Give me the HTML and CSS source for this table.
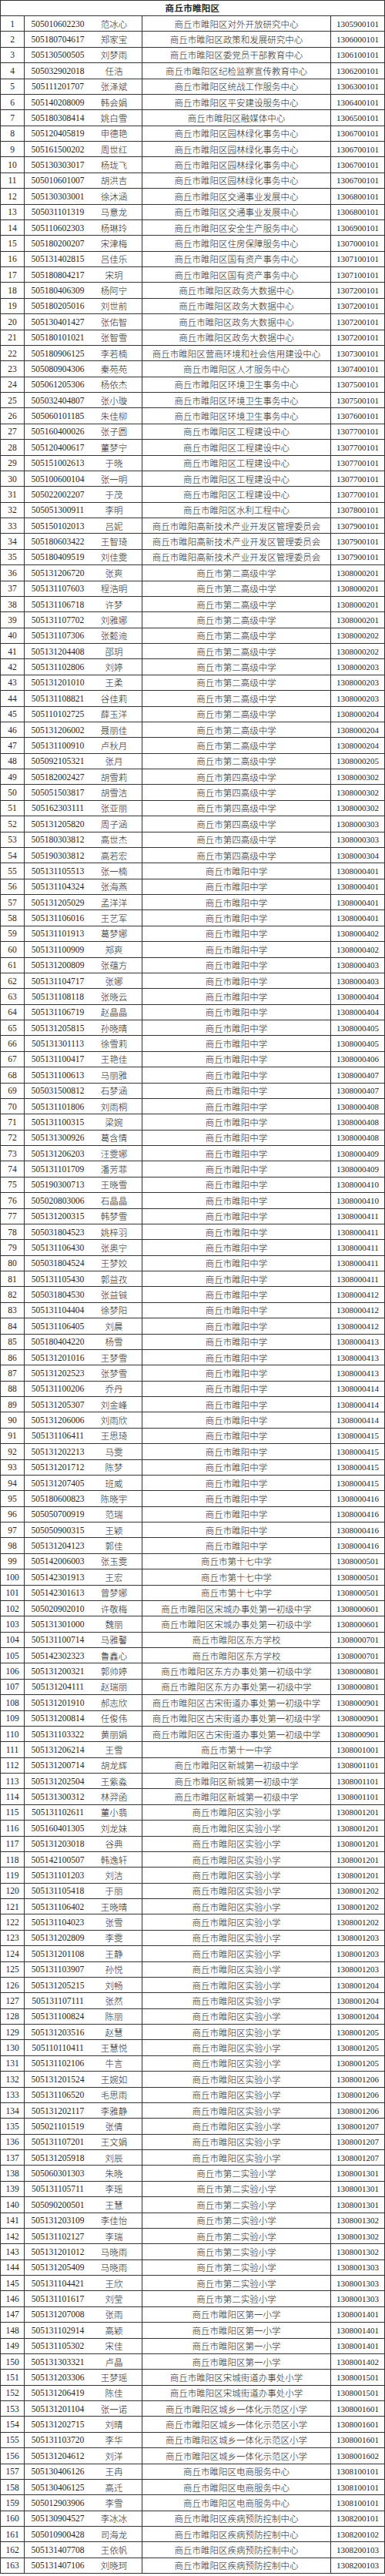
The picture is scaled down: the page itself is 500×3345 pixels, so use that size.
FILE: index.html
```html
<!DOCTYPE html>
<html lang="zh-CN">
<head>
<meta charset="utf-8">
<title>商丘市睢阳区</title>
<link rel="stylesheet" href="styles.css">
</head>
<body>
<div class="sheet">
<div class="title">商丘市睢阳区</div>
<div class="row"><span class="no">1</span><span class="id">505010602230</span><span class="nm">范冰心</span><span class="un">商丘市睢阳区对外开放研究中心</span><span class="cd">1305900101</span></div>
<div class="row"><span class="no">2</span><span class="id">505180704617</span><span class="nm">郑家宝</span><span class="un">商丘市睢阳区政策和发展研究中心</span><span class="cd">1306000101</span></div>
<div class="row"><span class="no">3</span><span class="id">505130500505</span><span class="nm">刘梦雨</span><span class="un">商丘市睢阳区委党员干部教育中心</span><span class="cd">1306100101</span></div>
<div class="row"><span class="no">4</span><span class="id">505032902018</span><span class="nm">任浩</span><span class="un">商丘市睢阳区纪检监察宣传教育中心</span><span class="cd">1306200101</span></div>
<div class="row"><span class="no">5</span><span class="id">505111201707</span><span class="nm">张泽斌</span><span class="un">商丘市睢阳区统战工作服务中心</span><span class="cd">1306300101</span></div>
<div class="row"><span class="no">6</span><span class="id">505140208009</span><span class="nm">韩会娟</span><span class="un">商丘市睢阳区平安建设服务中心</span><span class="cd">1306400101</span></div>
<div class="row"><span class="no">7</span><span class="id">505180308414</span><span class="nm">姚白雪</span><span class="un">商丘市睢阳区融媒体中心</span><span class="cd">1306500101</span></div>
<div class="row"><span class="no">8</span><span class="id">505120405819</span><span class="nm">申德艳</span><span class="un">商丘市睢阳区园林绿化事务中心</span><span class="cd">1306700101</span></div>
<div class="row"><span class="no">9</span><span class="id">505161500202</span><span class="nm">周世红</span><span class="un">商丘市睢阳区园林绿化事务中心</span><span class="cd">1306700101</span></div>
<div class="row"><span class="no">10</span><span class="id">505130303017</span><span class="nm">杨珑飞</span><span class="un">商丘市睢阳区园林绿化事务中心</span><span class="cd">1306700101</span></div>
<div class="row"><span class="no">11</span><span class="id">505010601007</span><span class="nm">胡洪吉</span><span class="un">商丘市睢阳区园林绿化事务中心</span><span class="cd">1306700101</span></div>
<div class="row"><span class="no">12</span><span class="id">505130303001</span><span class="nm">徐沐涵</span><span class="un">商丘市睢阳区交通事业发展中心</span><span class="cd">1306800101</span></div>
<div class="row"><span class="no">13</span><span class="id">505031101319</span><span class="nm">马意龙</span><span class="un">商丘市睢阳区交通事业发展中心</span><span class="cd">1306800101</span></div>
<div class="row"><span class="no">14</span><span class="id">505110602303</span><span class="nm">杨琳玲</span><span class="un">商丘市睢阳区安全生产服务中心</span><span class="cd">1306900101</span></div>
<div class="row"><span class="no">15</span><span class="id">505180200207</span><span class="nm">宋津梅</span><span class="un">商丘市睢阳区住房保障服务中心</span><span class="cd">1307000101</span></div>
<div class="row"><span class="no">16</span><span class="id">505131402815</span><span class="nm">吕佳乐</span><span class="un">商丘市睢阳区国有资产事务中心</span><span class="cd">1307100101</span></div>
<div class="row"><span class="no">17</span><span class="id">505180804217</span><span class="nm">宋玥</span><span class="un">商丘市睢阳区国有资产事务中心</span><span class="cd">1307100101</span></div>
<div class="row"><span class="no">18</span><span class="id">505180406309</span><span class="nm">杨阿宁</span><span class="un">商丘市睢阳区政务大数据中心</span><span class="cd">1307200101</span></div>
<div class="row"><span class="no">19</span><span class="id">505180205016</span><span class="nm">刘世前</span><span class="un">商丘市睢阳区政务大数据中心</span><span class="cd">1307200101</span></div>
<div class="row"><span class="no">20</span><span class="id">505130401427</span><span class="nm">张佑智</span><span class="un">商丘市睢阳区政务大数据中心</span><span class="cd">1307200101</span></div>
<div class="row"><span class="no">21</span><span class="id">505180101021</span><span class="nm">张智雪</span><span class="un">商丘市睢阳区政务大数据中心</span><span class="cd">1307200101</span></div>
<div class="row"><span class="no">22</span><span class="id">505180906125</span><span class="nm">李若楠</span><span class="un">商丘市睢阳区营商环境和社会信用建设中心</span><span class="cd">1307300101</span></div>
<div class="row"><span class="no">23</span><span class="id">505080904306</span><span class="nm">秦苑苑</span><span class="un">商丘市睢阳区人才服务中心</span><span class="cd">1307400101</span></div>
<div class="row"><span class="no">24</span><span class="id">505061205306</span><span class="nm">杨依杰</span><span class="un">商丘市睢阳区环境卫生事务中心</span><span class="cd">1307500101</span></div>
<div class="row"><span class="no">25</span><span class="id">505032404807</span><span class="nm">张小璇</span><span class="un">商丘市睢阳区环境卫生事务中心</span><span class="cd">1307500101</span></div>
<div class="row"><span class="no">26</span><span class="id">505060101185</span><span class="nm">朱佳柳</span><span class="un">商丘市睢阳区环境卫生事务中心</span><span class="cd">1307600101</span></div>
<div class="row"><span class="no">27</span><span class="id">505160400026</span><span class="nm">张子圆</span><span class="un">商丘市睢阳区工程建设中心</span><span class="cd">1307700101</span></div>
<div class="row"><span class="no">28</span><span class="id">505120400617</span><span class="nm">董梦宁</span><span class="un">商丘市睢阳区工程建设中心</span><span class="cd">1307700101</span></div>
<div class="row"><span class="no">29</span><span class="id">505151002613</span><span class="nm">于晓</span><span class="un">商丘市睢阳区工程建设中心</span><span class="cd">1307700101</span></div>
<div class="row"><span class="no">30</span><span class="id">505100600104</span><span class="nm">张一明</span><span class="un">商丘市睢阳区工程建设中心</span><span class="cd">1307700101</span></div>
<div class="row"><span class="no">31</span><span class="id">505022002207</span><span class="nm">于茂</span><span class="un">商丘市睢阳区工程建设中心</span><span class="cd">1307700101</span></div>
<div class="row"><span class="no">32</span><span class="id">505051300911</span><span class="nm">李明</span><span class="un">商丘市睢阳区水利工程中心</span><span class="cd">1307800101</span></div>
<div class="row"><span class="no">33</span><span class="id">505150102013</span><span class="nm">吕妮</span><span class="un">商丘市睢阳高新技术产业开发区管理委员会</span><span class="cd">1307900101</span></div>
<div class="row"><span class="no">34</span><span class="id">505180603422</span><span class="nm">王智琦</span><span class="un">商丘市睢阳高新技术产业开发区管理委员会</span><span class="cd">1307900101</span></div>
<div class="row"><span class="no">35</span><span class="id">505180409519</span><span class="nm">刘佳雯</span><span class="un">商丘市睢阳高新技术产业开发区管理委员会</span><span class="cd">1307900101</span></div>
<div class="row"><span class="no">36</span><span class="id">505131206720</span><span class="nm">张爽</span><span class="un">商丘市第二高级中学</span><span class="cd">1308000201</span></div>
<div class="row"><span class="no">37</span><span class="id">505131107603</span><span class="nm">程浩明</span><span class="un">商丘市第二高级中学</span><span class="cd">1308000201</span></div>
<div class="row"><span class="no">38</span><span class="id">505131106718</span><span class="nm">许梦</span><span class="un">商丘市第二高级中学</span><span class="cd">1308000201</span></div>
<div class="row"><span class="no">39</span><span class="id">505131107702</span><span class="nm">刘雅娜</span><span class="un">商丘市第二高级中学</span><span class="cd">1308000201</span></div>
<div class="row"><span class="no">40</span><span class="id">505131107306</span><span class="nm">张懿迪</span><span class="un">商丘市第二高级中学</span><span class="cd">1308000202</span></div>
<div class="row"><span class="no">41</span><span class="id">505131204408</span><span class="nm">邵玥</span><span class="un">商丘市第二高级中学</span><span class="cd">1308000202</span></div>
<div class="row"><span class="no">42</span><span class="id">505131102806</span><span class="nm">刘婷</span><span class="un">商丘市第二高级中学</span><span class="cd">1308000203</span></div>
<div class="row"><span class="no">43</span><span class="id">505131201010</span><span class="nm">王柔</span><span class="un">商丘市第二高级中学</span><span class="cd">1308000203</span></div>
<div class="row"><span class="no">44</span><span class="id">505131108821</span><span class="nm">谷佳莉</span><span class="un">商丘市第二高级中学</span><span class="cd">1308000203</span></div>
<div class="row"><span class="no">45</span><span class="id">505110102725</span><span class="nm">薛玉洋</span><span class="un">商丘市第二高级中学</span><span class="cd">1308000204</span></div>
<div class="row"><span class="no">46</span><span class="id">505131206002</span><span class="nm">聂丽佳</span><span class="un">商丘市第二高级中学</span><span class="cd">1308000204</span></div>
<div class="row"><span class="no">47</span><span class="id">505131100910</span><span class="nm">卢秋月</span><span class="un">商丘市第二高级中学</span><span class="cd">1308000204</span></div>
<div class="row"><span class="no">48</span><span class="id">505092105321</span><span class="nm">张月</span><span class="un">商丘市第二高级中学</span><span class="cd">1308000205</span></div>
<div class="row"><span class="no">49</span><span class="id">505182002427</span><span class="nm">胡雪莉</span><span class="un">商丘市第四高级中学</span><span class="cd">1308000302</span></div>
<div class="row"><span class="no">50</span><span class="id">505051503817</span><span class="nm">胡雪洁</span><span class="un">商丘市第四高级中学</span><span class="cd">1308000302</span></div>
<div class="row"><span class="no">51</span><span class="id">505162303111</span><span class="nm">张亚丽</span><span class="un">商丘市第四高级中学</span><span class="cd">1308000302</span></div>
<div class="row"><span class="no">52</span><span class="id">505131205820</span><span class="nm">周子涵</span><span class="un">商丘市第四高级中学</span><span class="cd">1308000303</span></div>
<div class="row"><span class="no">53</span><span class="id">505180303812</span><span class="nm">高世杰</span><span class="un">商丘市第四高级中学</span><span class="cd">1308000303</span></div>
<div class="row"><span class="no">54</span><span class="id">505190303812</span><span class="nm">高若宏</span><span class="un">商丘市第四高级中学</span><span class="cd">1308000304</span></div>
<div class="row"><span class="no">55</span><span class="id">505131105513</span><span class="nm">张一楠</span><span class="un">商丘市睢阳中学</span><span class="cd">1308000401</span></div>
<div class="row"><span class="no">56</span><span class="id">505131104324</span><span class="nm">张海燕</span><span class="un">商丘市睢阳中学</span><span class="cd">1308000401</span></div>
<div class="row"><span class="no">57</span><span class="id">505131205029</span><span class="nm">孟洋洋</span><span class="un">商丘市睢阳中学</span><span class="cd">1308000401</span></div>
<div class="row"><span class="no">58</span><span class="id">505131106016</span><span class="nm">王艺军</span><span class="un">商丘市睢阳中学</span><span class="cd">1308000401</span></div>
<div class="row"><span class="no">59</span><span class="id">505131101913</span><span class="nm">葛梦娜</span><span class="un">商丘市睢阳中学</span><span class="cd">1308000402</span></div>
<div class="row"><span class="no">60</span><span class="id">505131100909</span><span class="nm">郑爽</span><span class="un">商丘市睢阳中学</span><span class="cd">1308000402</span></div>
<div class="row"><span class="no">61</span><span class="id">505131200809</span><span class="nm">张蕴方</span><span class="un">商丘市睢阳中学</span><span class="cd">1308000403</span></div>
<div class="row"><span class="no">62</span><span class="id">505131104717</span><span class="nm">张娜</span><span class="un">商丘市睢阳中学</span><span class="cd">1308000403</span></div>
<div class="row"><span class="no">63</span><span class="id">505131108118</span><span class="nm">张晓云</span><span class="un">商丘市睢阳中学</span><span class="cd">1308000404</span></div>
<div class="row"><span class="no">64</span><span class="id">505131106719</span><span class="nm">赵晶晶</span><span class="un">商丘市睢阳中学</span><span class="cd">1308000404</span></div>
<div class="row"><span class="no">65</span><span class="id">505131205815</span><span class="nm">孙晓晴</span><span class="un">商丘市睢阳中学</span><span class="cd">1308000405</span></div>
<div class="row"><span class="no">66</span><span class="id">505131301113</span><span class="nm">徐雪莉</span><span class="un">商丘市睢阳中学</span><span class="cd">1308000405</span></div>
<div class="row"><span class="no">67</span><span class="id">505131100417</span><span class="nm">王艳佳</span><span class="un">商丘市睢阳中学</span><span class="cd">1308000406</span></div>
<div class="row"><span class="no">68</span><span class="id">505131100613</span><span class="nm">马丽雅</span><span class="un">商丘市睢阳中学</span><span class="cd">1308000407</span></div>
<div class="row"><span class="no">69</span><span class="id">505031500812</span><span class="nm">石梦涵</span><span class="un">商丘市睢阳中学</span><span class="cd">1308000407</span></div>
<div class="row"><span class="no">70</span><span class="id">505131101806</span><span class="nm">刘雨桐</span><span class="un">商丘市睢阳中学</span><span class="cd">1308000408</span></div>
<div class="row"><span class="no">71</span><span class="id">505131100315</span><span class="nm">梁婉</span><span class="un">商丘市睢阳中学</span><span class="cd">1308000408</span></div>
<div class="row"><span class="no">72</span><span class="id">505131300926</span><span class="nm">葛含情</span><span class="un">商丘市睢阳中学</span><span class="cd">1308000408</span></div>
<div class="row"><span class="no">73</span><span class="id">505131206203</span><span class="nm">汪雯娜</span><span class="un">商丘市睢阳中学</span><span class="cd">1308000409</span></div>
<div class="row"><span class="no">74</span><span class="id">505131101709</span><span class="nm">潘芳菲</span><span class="un">商丘市睢阳中学</span><span class="cd">1308000409</span></div>
<div class="row"><span class="no">75</span><span class="id">505190300713</span><span class="nm">王晓雪</span><span class="un">商丘市睢阳中学</span><span class="cd">1308000410</span></div>
<div class="row"><span class="no">76</span><span class="id">505020803006</span><span class="nm">石晶晶</span><span class="un">商丘市睢阳中学</span><span class="cd">1308000410</span></div>
<div class="row"><span class="no">77</span><span class="id">505131200315</span><span class="nm">韩梦雪</span><span class="un">商丘市睢阳中学</span><span class="cd">1308000411</span></div>
<div class="row"><span class="no">78</span><span class="id">505031804523</span><span class="nm">姚梓羽</span><span class="un">商丘市睢阳中学</span><span class="cd">1308000411</span></div>
<div class="row"><span class="no">79</span><span class="id">505131106430</span><span class="nm">张奥宁</span><span class="un">商丘市睢阳中学</span><span class="cd">1308000411</span></div>
<div class="row"><span class="no">80</span><span class="id">505031804524</span><span class="nm">王梦姣</span><span class="un">商丘市睢阳中学</span><span class="cd">1308000411</span></div>
<div class="row"><span class="no">81</span><span class="id">505131105430</span><span class="nm">郭益孜</span><span class="un">商丘市睢阳中学</span><span class="cd">1308000411</span></div>
<div class="row"><span class="no">82</span><span class="id">505031804530</span><span class="nm">张益铖</span><span class="un">商丘市睢阳中学</span><span class="cd">1308000412</span></div>
<div class="row"><span class="no">83</span><span class="id">505131104404</span><span class="nm">徐梦阳</span><span class="un">商丘市睢阳中学</span><span class="cd">1308000412</span></div>
<div class="row"><span class="no">84</span><span class="id">505131106405</span><span class="nm">刘晨</span><span class="un">商丘市睢阳中学</span><span class="cd">1308000412</span></div>
<div class="row"><span class="no">85</span><span class="id">505180404220</span><span class="nm">杨雪</span><span class="un">商丘市睢阳中学</span><span class="cd">1308000413</span></div>
<div class="row"><span class="no">86</span><span class="id">505131201016</span><span class="nm">王梦雪</span><span class="un">商丘市睢阳中学</span><span class="cd">1308000413</span></div>
<div class="row"><span class="no">87</span><span class="id">505131202523</span><span class="nm">张梦雪</span><span class="un">商丘市睢阳中学</span><span class="cd">1308000413</span></div>
<div class="row"><span class="no">88</span><span class="id">505131100206</span><span class="nm">乔丹</span><span class="un">商丘市睢阳中学</span><span class="cd">1308000414</span></div>
<div class="row"><span class="no">89</span><span class="id">505131205307</span><span class="nm">刘金峰</span><span class="un">商丘市睢阳中学</span><span class="cd">1308000414</span></div>
<div class="row"><span class="no">90</span><span class="id">505131206006</span><span class="nm">刘雨欣</span><span class="un">商丘市睢阳中学</span><span class="cd">1308000414</span></div>
<div class="row"><span class="no">91</span><span class="id">505131106411</span><span class="nm">王思琦</span><span class="un">商丘市睢阳中学</span><span class="cd">1308000415</span></div>
<div class="row"><span class="no">92</span><span class="id">505131202213</span><span class="nm">马雯</span><span class="un">商丘市睢阳中学</span><span class="cd">1308000415</span></div>
<div class="row"><span class="no">93</span><span class="id">505131201712</span><span class="nm">陈梦</span><span class="un">商丘市睢阳中学</span><span class="cd">1308000415</span></div>
<div class="row"><span class="no">94</span><span class="id">505131207405</span><span class="nm">班威</span><span class="un">商丘市睢阳中学</span><span class="cd">1308000415</span></div>
<div class="row"><span class="no">95</span><span class="id">505180600823</span><span class="nm">陈晓宇</span><span class="un">商丘市睢阳中学</span><span class="cd">1308000416</span></div>
<div class="row"><span class="no">96</span><span class="id">505050700919</span><span class="nm">范瑞</span><span class="un">商丘市睢阳中学</span><span class="cd">1308000416</span></div>
<div class="row"><span class="no">97</span><span class="id">505050900315</span><span class="nm">王颖</span><span class="un">商丘市睢阳中学</span><span class="cd">1308000416</span></div>
<div class="row"><span class="no">98</span><span class="id">505131204123</span><span class="nm">郭佳</span><span class="un">商丘市睢阳中学</span><span class="cd">1308000416</span></div>
<div class="row"><span class="no">99</span><span class="id">505142006003</span><span class="nm">张玉雯</span><span class="un">商丘市第十七中学</span><span class="cd">1308000501</span></div>
<div class="row"><span class="no">100</span><span class="id">505142301913</span><span class="nm">王宏</span><span class="un">商丘市第十七中学</span><span class="cd">1308000501</span></div>
<div class="row"><span class="no">101</span><span class="id">505142301613</span><span class="nm">曾梦娜</span><span class="un">商丘市第十七中学</span><span class="cd">1308000501</span></div>
<div class="row"><span class="no">102</span><span class="id">505020902010</span><span class="nm">许敬梅</span><span class="un">商丘市睢阳区宋城办事处第一初级中学</span><span class="cd">1308000601</span></div>
<div class="row"><span class="no">103</span><span class="id">505131301000</span><span class="nm">魏丽</span><span class="un">商丘市睢阳区宋城办事处第一初级中学</span><span class="cd">1308000601</span></div>
<div class="row"><span class="no">104</span><span class="id">505131100714</span><span class="nm">马雅馨</span><span class="un">商丘市睢阳区东方学校</span><span class="cd">1308000701</span></div>
<div class="row"><span class="no">105</span><span class="id">505142302323</span><span class="nm">鲁鑫心</span><span class="un">商丘市睢阳区东方学校</span><span class="cd">1308000701</span></div>
<div class="row"><span class="no">106</span><span class="id">505131200321</span><span class="nm">郭帅婷</span><span class="un">商丘市睢阳区东方办事处第一初级中学</span><span class="cd">1308000801</span></div>
<div class="row"><span class="no">107</span><span class="id">505131204111</span><span class="nm">赵瑞丽</span><span class="un">商丘市睢阳区东方办事处第一初级中学</span><span class="cd">1308000801</span></div>
<div class="row"><span class="no">108</span><span class="id">505131201910</span><span class="nm">郝志欣</span><span class="un">商丘市睢阳区古宋街道办事处第一初级中学</span><span class="cd">1308000901</span></div>
<div class="row"><span class="no">109</span><span class="id">505131200814</span><span class="nm">任俊伟</span><span class="un">商丘市睢阳区古宋街道办事处第一初级中学</span><span class="cd">1308000901</span></div>
<div class="row"><span class="no">110</span><span class="id">505131103322</span><span class="nm">黄丽娟</span><span class="un">商丘市睢阳区古宋街道办事处第一初级中学</span><span class="cd">1308000901</span></div>
<div class="row"><span class="no">111</span><span class="id">505131206214</span><span class="nm">王雪</span><span class="un">商丘市第十一中学</span><span class="cd">1308001001</span></div>
<div class="row"><span class="no">112</span><span class="id">505131200714</span><span class="nm">胡龙辉</span><span class="un">商丘市睢阳区新城第一初级中学</span><span class="cd">1308001101</span></div>
<div class="row"><span class="no">113</span><span class="id">505131202504</span><span class="nm">王紫淼</span><span class="un">商丘市睢阳区新城第一初级中学</span><span class="cd">1308001101</span></div>
<div class="row"><span class="no">114</span><span class="id">505131300312</span><span class="nm">林羿函</span><span class="un">商丘市睢阳区新城第一初级中学</span><span class="cd">1308001101</span></div>
<div class="row"><span class="no">115</span><span class="id">505131102611</span><span class="nm">董小翡</span><span class="un">商丘市睢阳区实验小学</span><span class="cd">1308001201</span></div>
<div class="row"><span class="no">116</span><span class="id">505160401305</span><span class="nm">刘龙妹</span><span class="un">商丘市睢阳区实验小学</span><span class="cd">1308001201</span></div>
<div class="row"><span class="no">117</span><span class="id">505131203018</span><span class="nm">谷典</span><span class="un">商丘市睢阳区实验小学</span><span class="cd">1308001201</span></div>
<div class="row"><span class="no">118</span><span class="id">505142100507</span><span class="nm">韩逸轩</span><span class="un">商丘市睢阳区实验小学</span><span class="cd">1308001201</span></div>
<div class="row"><span class="no">119</span><span class="id">505131101203</span><span class="nm">刘洁</span><span class="un">商丘市睢阳区实验小学</span><span class="cd">1308001201</span></div>
<div class="row"><span class="no">120</span><span class="id">505131105418</span><span class="nm">于丽</span><span class="un">商丘市睢阳区实验小学</span><span class="cd">1308001202</span></div>
<div class="row"><span class="no">121</span><span class="id">505131106402</span><span class="nm">王晓晴</span><span class="un">商丘市睢阳区实验小学</span><span class="cd">1308001202</span></div>
<div class="row"><span class="no">122</span><span class="id">505131104023</span><span class="nm">张雪</span><span class="un">商丘市睢阳区实验小学</span><span class="cd">1308001202</span></div>
<div class="row"><span class="no">123</span><span class="id">505131202809</span><span class="nm">李雯</span><span class="un">商丘市睢阳区实验小学</span><span class="cd">1308001203</span></div>
<div class="row"><span class="no">124</span><span class="id">505131201108</span><span class="nm">王静</span><span class="un">商丘市睢阳区实验小学</span><span class="cd">1308001203</span></div>
<div class="row"><span class="no">125</span><span class="id">505131103907</span><span class="nm">孙悦</span><span class="un">商丘市睢阳区实验小学</span><span class="cd">1308001203</span></div>
<div class="row"><span class="no">126</span><span class="id">505131205215</span><span class="nm">刘畅</span><span class="un">商丘市睢阳区实验小学</span><span class="cd">1308001204</span></div>
<div class="row"><span class="no">127</span><span class="id">505131107111</span><span class="nm">张然</span><span class="un">商丘市睢阳区实验小学</span><span class="cd">1308001204</span></div>
<div class="row"><span class="no">128</span><span class="id">505131100824</span><span class="nm">陈丽</span><span class="un">商丘市睢阳区实验小学</span><span class="cd">1308001204</span></div>
<div class="row"><span class="no">129</span><span class="id">505131203516</span><span class="nm">赵慧</span><span class="un">商丘市睢阳区实验小学</span><span class="cd">1308001205</span></div>
<div class="row"><span class="no">130</span><span class="id">505110110411</span><span class="nm">王慧悦</span><span class="un">商丘市睢阳区实验小学</span><span class="cd">1308001205</span></div>
<div class="row"><span class="no">131</span><span class="id">505131102106</span><span class="nm">牛言</span><span class="un">商丘市睢阳区实验小学</span><span class="cd">1308001205</span></div>
<div class="row"><span class="no">132</span><span class="id">505131201524</span><span class="nm">王婉如</span><span class="un">商丘市睢阳区实验小学</span><span class="cd">1308001206</span></div>
<div class="row"><span class="no">133</span><span class="id">505131106520</span><span class="nm">毛思雨</span><span class="un">商丘市睢阳区实验小学</span><span class="cd">1308001206</span></div>
<div class="row"><span class="no">134</span><span class="id">505131202117</span><span class="nm">李雅静</span><span class="un">商丘市睢阳区实验小学</span><span class="cd">1308001206</span></div>
<div class="row"><span class="no">135</span><span class="id">505021101519</span><span class="nm">张倩</span><span class="un">商丘市睢阳区实验小学</span><span class="cd">1308001207</span></div>
<div class="row"><span class="no">136</span><span class="id">505131107201</span><span class="nm">王文娟</span><span class="un">商丘市睢阳区实验小学</span><span class="cd">1308001207</span></div>
<div class="row"><span class="no">137</span><span class="id">505131205918</span><span class="nm">刘辰</span><span class="un">商丘市睢阳区实验小学</span><span class="cd">1308001207</span></div>
<div class="row"><span class="no">138</span><span class="id">505060301303</span><span class="nm">朱晓</span><span class="un">商丘市第二实验小学</span><span class="cd">1308001301</span></div>
<div class="row"><span class="no">139</span><span class="id">505131105711</span><span class="nm">李瑶</span><span class="un">商丘市第二实验小学</span><span class="cd">1308001301</span></div>
<div class="row"><span class="no">140</span><span class="id">505090200501</span><span class="nm">王慧</span><span class="un">商丘市第二实验小学</span><span class="cd">1308001301</span></div>
<div class="row"><span class="no">141</span><span class="id">505131203109</span><span class="nm">李佳怡</span><span class="un">商丘市第二实验小学</span><span class="cd">1308001302</span></div>
<div class="row"><span class="no">142</span><span class="id">505131102127</span><span class="nm">李瑞</span><span class="un">商丘市第二实验小学</span><span class="cd">1308001302</span></div>
<div class="row"><span class="no">143</span><span class="id">505131201012</span><span class="nm">马晓雨</span><span class="un">商丘市第二实验小学</span><span class="cd">1308001302</span></div>
<div class="row"><span class="no">144</span><span class="id">505131205409</span><span class="nm">马晓雨</span><span class="un">商丘市第二实验小学</span><span class="cd">1308001303</span></div>
<div class="row"><span class="no">145</span><span class="id">505131104421</span><span class="nm">王欣</span><span class="un">商丘市第二实验小学</span><span class="cd">1308001303</span></div>
<div class="row"><span class="no">146</span><span class="id">505131101617</span><span class="nm">刘莹</span><span class="un">商丘市第二实验小学</span><span class="cd">1308001303</span></div>
<div class="row"><span class="no">147</span><span class="id">505131207008</span><span class="nm">张雨</span><span class="un">商丘市睢阳区第一小学</span><span class="cd">1308001401</span></div>
<div class="row"><span class="no">148</span><span class="id">505131102914</span><span class="nm">高颖</span><span class="un">商丘市睢阳区第一小学</span><span class="cd">1308001401</span></div>
<div class="row"><span class="no">149</span><span class="id">505131105302</span><span class="nm">宋佳</span><span class="un">商丘市睢阳区第一小学</span><span class="cd">1308001401</span></div>
<div class="row"><span class="no">150</span><span class="id">505131303321</span><span class="nm">卢晶</span><span class="un">商丘市睢阳区第一小学</span><span class="cd">1308001402</span></div>
<div class="row"><span class="no">151</span><span class="id">505131203306</span><span class="nm">王梦瑶</span><span class="un">商丘市睢阳区宋城街道办事处小学</span><span class="cd">1308001501</span></div>
<div class="row"><span class="no">152</span><span class="id">505131206419</span><span class="nm">陈佳</span><span class="un">商丘市睢阳区宋城街道办事处小学</span><span class="cd">1308001501</span></div>
<div class="row"><span class="no">153</span><span class="id">505131201104</span><span class="nm">张一诺</span><span class="un">商丘市睢阳区城乡一体化示范区小学</span><span class="cd">1308001601</span></div>
<div class="row"><span class="no">154</span><span class="id">505131202715</span><span class="nm">刘晴</span><span class="un">商丘市睢阳区城乡一体化示范区小学</span><span class="cd">1308001601</span></div>
<div class="row"><span class="no">155</span><span class="id">505131103720</span><span class="nm">李华</span><span class="un">商丘市睢阳区城乡一体化示范区小学</span><span class="cd">1308001601</span></div>
<div class="row"><span class="no">156</span><span class="id">505131204612</span><span class="nm">刘洋</span><span class="un">商丘市睢阳区城乡一体化示范区小学</span><span class="cd">1308001602</span></div>
<div class="row"><span class="no">157</span><span class="id">505130406126</span><span class="nm">王冉</span><span class="un">商丘市睢阳区电商服务中心</span><span class="cd">1308100101</span></div>
<div class="row"><span class="no">158</span><span class="id">505130406125</span><span class="nm">高迁</span><span class="un">商丘市睢阳区电商服务中心</span><span class="cd">1308100101</span></div>
<div class="row"><span class="no">159</span><span class="id">505012903906</span><span class="nm">李雪</span><span class="un">商丘市睢阳区电商服务中心</span><span class="cd">1308100101</span></div>
<div class="row"><span class="no">160</span><span class="id">505130904527</span><span class="nm">李冰冰</span><span class="un">商丘市睢阳区疾病预防控制中心</span><span class="cd">1308200101</span></div>
<div class="row"><span class="no">161</span><span class="id">505010900428</span><span class="nm">司海龙</span><span class="un">商丘市睢阳区疾病预防控制中心</span><span class="cd">1308200102</span></div>
<div class="row"><span class="no">162</span><span class="id">505131407708</span><span class="nm">王依帆</span><span class="un">商丘市睢阳区疾病预防控制中心</span><span class="cd">1308200103</span></div>
<div class="row"><span class="no">163</span><span class="id">505131407106</span><span class="nm">刘晓珂</span><span class="un">商丘市睢阳区疾病预防控制中心</span><span class="cd">1308200103</span></div>
</div>
</body>
</html>
```
FILE: styles.css
```css
html, body {
  margin: 0;
  padding: 0;
  background: #ffffff;
}

.sheet {
  width: 500px;
  box-sizing: border-box;
  border: 1px solid #333;
  border-bottom: none;
  color: #262626;
  font-family: "Liberation Serif", "Noto Sans CJK SC", serif;
  font-size: 11.5px;
}

.title {
  height: 20px;
  box-sizing: border-box;
  border-bottom: 1px solid #333;
  line-height: 19px;
  text-align: center;
  font-weight: bold;
  font-family: "Noto Sans CJK SC", sans-serif;
  font-size: 11.5px;
  letter-spacing: 0.3px;
}

.row {
  display: grid;
  grid-template-columns: 31px 86px 67px 245px 1fr;
  height: 20.38px;
  box-sizing: border-box;
  border-bottom: 1px solid #333;
}

.row > span {
  display: flex;
  align-items: center;
  justify-content: center;
  white-space: nowrap;
  overflow: hidden;
  box-sizing: border-box;
}

.no {
  border-right: 1px solid #333;
}

.id {
  padding-left: 0;
}

.nm {
  border-right: 1px solid #333;
  font-family: "Noto Sans CJK SC", sans-serif;
  font-weight: 300;
  font-size: 11.5px;
  padding-right: 6px;
}

.un {
  border-right: 1px solid #333;
  font-family: "Noto Sans CJK SC", sans-serif;
  font-weight: 300;
  font-size: 11.5px;
}

.cd {
  font-size: 11px;
}
```
